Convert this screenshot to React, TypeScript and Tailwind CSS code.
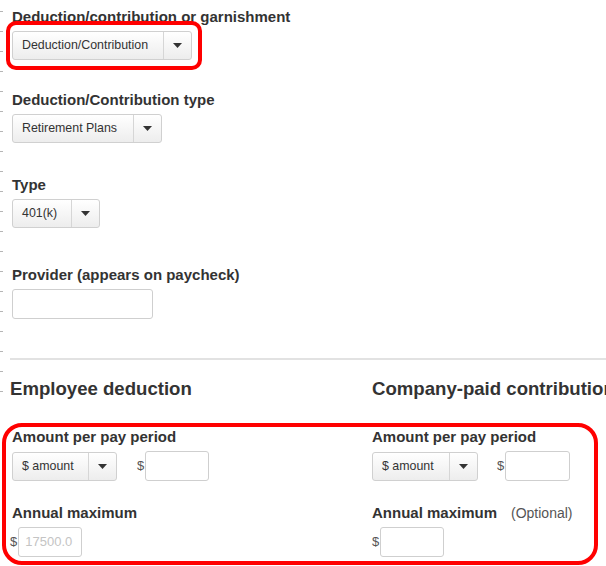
import type { ReactNode } from 'react';

const font = "font-['Liberation_Sans',Arial,Helvetica,sans-serif]";

function Caret() {
  return (
    <svg width="9" height="5" viewBox="0 0 9 5" className="block">
      <path d="M0 0h9L4.5 5Z" fill="#333" />
    </svg>
  );
}

function Select({ label, textWidth }: { label: string; textWidth: string }) {
  return (
    <div className="inline-flex h-[29px] rounded-[3px] border border-[#d0d0d0] bg-gradient-to-b from-white to-[#ededed] text-[12.4px] text-[#333]">
      <div className={`flex items-center pl-[9px] ${textWidth}`}>{label}</div>
      <div className="flex w-[28px] items-center justify-center border-l border-[#d6d6d6]">
        <Caret />
      </div>
    </div>
  );
}

function Field({ label, children, className = '' }: { label: ReactNode; children: ReactNode; className?: string }) {
  return (
    <div className={className}>
      <div className="text-[15px] font-bold leading-[18px] text-[#333]">{label}</div>
      <div className="mt-[5px]">{children}</div>
    </div>
  );
}

function TextBox({ width, value }: { width: string; value?: string }) {
  return (
    <div className={`flex h-[30px] items-center rounded-[3px] border border-[#cfcfcf] bg-white pl-[6px] text-[13px] text-[#c4c4c4] ${width}`}>
      {value}
    </div>
  );
}

function Money({ width, value }: { width: string; value?: string }) {
  return (
    <div className="flex items-center">
      <span className="mr-px text-[13px] text-[#555]">$</span>
      <TextBox width={width} value={value} />
    </div>
  );
}

export default function App() {
  return (
    <div className={`flex h-[566px] w-[606px] overflow-hidden bg-white ${font}`}>
      {/* ruler ticks on the left edge */}
      <div className="flex w-[4px] shrink-0 flex-col pt-[11px]">
        {Array.from({ length: 20 }).map((_, i) => (
          <div key={i} className="mb-[19px] h-px w-[3px] bg-[#b5b5b5]" />
        ))}
      </div>

      <div className="min-w-0 flex-1 pt-[8px]">
        <div className="pl-[8px]">
          <Field label="Deduction/contribution or garnishment">
            <div className="relative inline-block">
              <Select label="Deduction/Contribution" textWidth="w-[150px]" />
              <div className="pointer-events-none absolute -top-[10px] -right-[10px] -bottom-[10px] -left-[6px] rounded-[10px] border-[4px] border-[#f00]" />
            </div>
          </Field>

          <Field label="Deduction/Contribution type" className="mt-[31px]">
            <Select label="Retirement Plans" textWidth="w-[120px]" />
          </Field>

          <Field label="Type" className="mt-[33px]">
            <Select label="401(k)" textWidth="w-[58px]" />
          </Field>

          <Field label="Provider (appears on paycheck)" className="mt-[38px]">
            <TextBox width="w-[141px]" />
          </Field>
        </div>

        <div className="mt-[39px] ml-[6px] h-[2px] bg-[#e2e2e2]" />

        <div className="relative mt-[18px]">
          <div className="flex whitespace-nowrap pl-[6px] text-[18.6px] font-bold leading-[22px] text-[#333]">
            <div className="w-[362px] shrink-0">Employee deduction</div>
            <div className="shrink-0">Company-paid contribution</div>
          </div>

          <div className="mt-[28px] flex pl-[8px]">
            <div className="w-[360px] shrink-0">
              <Field label="Amount per pay period">
                <div className="flex items-center">
                  <Select label="$ amount" textWidth="w-[75px]" />
                  <div className="ml-[20px]">
                    <Money width="w-[64px]" />
                  </div>
                </div>
              </Field>
              <Field label="Annual maximum" className="mt-[23px]">
                <div className="-ml-[2px]">
                  <Money width="w-[64px]" value="17500.0" />
                </div>
              </Field>
            </div>

            <div>
              <Field label="Amount per pay period">
                <div className="flex items-center">
                  <Select label="$ amount" textWidth="w-[76px]" />
                  <div className="ml-[19px]">
                    <Money width="w-[65px]" />
                  </div>
                </div>
              </Field>
              <Field
                label={
                  <span>
                    Annual maximum<span className="ml-[14px] text-[14px] font-normal text-[#555]">(Optional)</span>
                  </span>
                }
                className="mt-[23px]"
              >
                <Money width="w-[64px]" />
              </Field>
            </div>
          </div>

          <div className="pointer-events-none absolute top-[45px] left-[-2px] h-[142px] w-[596px] rounded-[20px] border-[4px] border-[#f00]" />
        </div>
      </div>
    </div>
  );
}
